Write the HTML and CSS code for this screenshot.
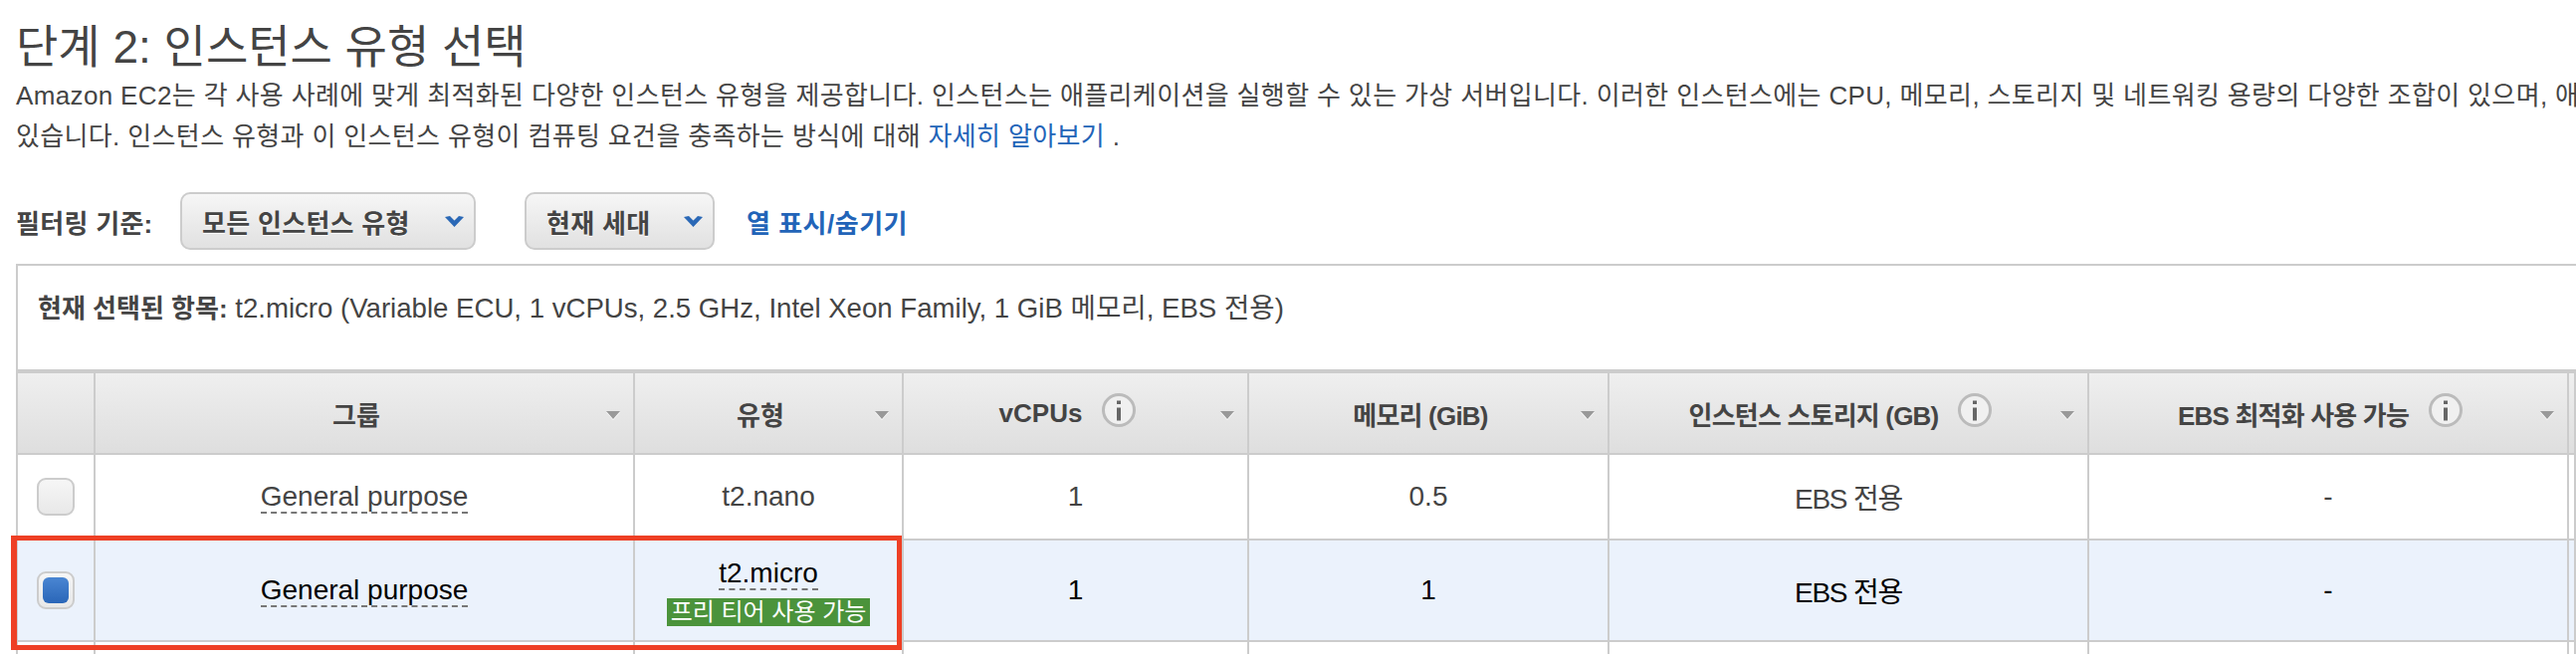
FILE: index.html
```html
<!DOCTYPE html>
<html lang="ko">
<head>
    <title>단계 2: 인스턴스 유형 선택</title>
    <link rel="stylesheet" href="styles.css">
</head>
<body>
<svg width="0" height="0" class="defs">
    <symbol id="info" viewBox="0 0 34 34">
        <circle cx="17" cy="17" r="15.5" fill="#f0f0f0" stroke="#bbb" stroke-width="3"/>
        <rect x="15" y="14.5" width="4" height="13" fill="#666"/>
        <rect x="15" y="7.5" width="4" height="3.5" fill="#666"/>
    </symbol>
    <symbol id="chevron" viewBox="0 0 19 11">
        <path d="M0 1 L5 0 L9.5 4.5 L14 0 L19 1 L9.5 11 Z" fill="#2a68b6"/>
    </symbol>
</svg>

<h1 class="title">단계 2: 인스턴스 유형 선택</h1>
<p class="intro">Amazon EC2는 각 사용 사례에 맞게 최적화된 다양한 인스턴스 유형을 제공합니다. 인스턴스는 애플리케이션을 실행할 수 있는 가상 서버입니다. 이러한 인스턴스에는 CPU, 메모리, 스토리지 및 네트워킹 용량의 다양한 조합이 있으며, 애<br>있습니다. 인스턴스 유형과 이 인스턴스 유형이 컴퓨팅 요건을 충족하는 방식에 대해 <a href="#" class="link">자세히 알아보기</a> .</p>

<div class="filters">
    <span class="filter-label">필터링 기준:</span>
    <button class="select select-type">모든 인스턴스 유형<svg class="chevron"><use href="#chevron"/></svg></button>
    <button class="select select-gen">현재 세대<svg class="chevron"><use href="#chevron"/></svg></button>
    <a href="#" class="link link-columns">열 표시/숨기기</a>
</div>

<div class="summary"><b>현재 선택된 항목:</b> t2.micro (Variable ECU, 1 vCPUs, 2.5 GHz, Intel Xeon Family, 1 GiB 메모리, EBS 전용)</div>

<table class="types">
    <colgroup>
        <col class="col-check">
        <col class="col-group">
        <col class="col-type">
        <col class="col-vcpu">
        <col class="col-memory">
        <col class="col-storage">
        <col class="col-ebs">
        <col class="col-rest">
    </colgroup>
    <thead>
        <tr>
            <th></th>
            <th><span class="head">그룹</span><i class="sort"></i></th>
            <th><span class="head">유형</span><i class="sort"></i></th>
            <th><span class="head">vCPUs<svg class="info"><use href="#info"/></svg></span><i class="sort"></i></th>
            <th><span class="head head-narrow">메모리 (GiB)</span><i class="sort"></i></th>
            <th><span class="head head-narrow">인스턴스 스토리지 (GB)<svg class="info"><use href="#info"/></svg></span><i class="sort"></i></th>
            <th><span class="head head-narrow">EBS 최적화 사용 가능<svg class="info"><use href="#info"/></svg></span><i class="sort"></i></th>
            <th></th>
        </tr>
    </thead>
    <tbody>
        <tr class="row">
            <td><span class="check"></span></td>
            <td><span class="dashed">General purpose</span></td>
            <td>t2.nano</td>
            <td>1</td>
            <td>0.5</td>
            <td class="ebs-only">EBS 전용</td>
            <td>-</td>
            <td></td>
        </tr>
        <tr class="row row-selected">
            <td><span class="check"><span class="check-on"></span></span></td>
            <td><span class="dashed">General purpose</span></td>
            <td class="type-free">
                <span class="dashed">t2.micro</span>
                <span class="free-tier">프리 티어 사용 가능</span>
            </td>
            <td>1</td>
            <td>1</td>
            <td class="ebs-only">EBS 전용</td>
            <td>-</td>
            <td></td>
        </tr>
        <tr class="row row-next">
            <td></td><td></td><td></td><td></td><td></td><td></td><td></td><td></td>
        </tr>
    </tbody>
</table>

<!-- 빨간 강조 표시 -->
<div class="highlight"></div>
</body>
</html>
```

FILE: styles.css
```css
html, body {
    margin: 0;
    padding: 0;
    height: 658px;
    overflow: hidden;
    background-color: #fff;
}

body {
    position: relative;
    font-family: "Liberation Sans", "Noto Sans CJK KR", sans-serif;
    font-size: 26px;
    color: #444;
    padding-left: 16px;
}

.defs {
    position: absolute;
}

.title {
    margin: 0;
    padding-top: 18px;
    font-size: 46px;
    line-height: 58px;
    font-weight: normal;
    white-space: nowrap;
}

.intro {
    margin: 0;
    line-height: 41px;
    letter-spacing: 0.36px;
    white-space: nowrap;
}

.link {
    color: #2264b8;
    text-decoration: none;
}

/* 필터 */
.filters {
    display: flex;
    align-items: center;
    height: 58px;
    margin-top: 35px;
    font-weight: bold;
    letter-spacing: 0.3px;
}

.filter-label {
    width: 165px;
}

.select {
    display: flex;
    align-items: center;
    justify-content: space-between;
    box-sizing: border-box;
    height: 58px;
    padding: 0 10px 0 20px;
    font: inherit;
    letter-spacing: inherit;
    color: #444;
    text-shadow: 0 1px 0 #fff;
    background: linear-gradient(#f6f6f6, #e1e1e1);
    border: 2px solid #ccc;
    border-radius: 10px;
}

.select-type {
    width: 297px;
}

.select-gen {
    width: 191px;
    margin-left: 49px;
}

.chevron {
    width: 19px;
    height: 11px;
}

.link-columns {
    margin-left: 32px;
    letter-spacing: 0.5px;
}

/* 현재 선택 */
.summary {
    box-sizing: border-box;
    width: 2572px;
    height: 106px;
    margin-top: 14px;
    padding: 27px 20px 0;
    font-size: 27.6px;
    line-height: 32px;
    white-space: nowrap;
    border: 2px solid #ccc;
    border-width: 2px 0 0 2px;
}

.summary b {
    font-size: 26px;
}

/* 표 */
.types {
    table-layout: fixed;
    width: 2572px;
    border-collapse: separate;
    border-spacing: 0;
    border-top: 4px solid #ccc;
    border-left: 2px solid #ccc;
}

.col-check { width: 78px; }
.col-group { width: 542px; }
.col-type { width: 270px; }
.col-vcpu { width: 347px; }
.col-memory { width: 362px; }
.col-storage { width: 482px; }
.col-ebs { width: 482px; }
.col-rest { width: 7px; }

.types th {
    position: relative;
    box-sizing: border-box;
    height: 82px;
    padding: 0 16px 0 0;
    background: linear-gradient(#efefef, #dedede);
    border-right: 2px solid #ccc;
    border-bottom: 2px solid #ccc;
    white-space: nowrap;
}

.head {
    display: inline-flex;
    align-items: center;
}

.head-narrow {
    letter-spacing: -0.8px;
}

.info {
    width: 34px;
    height: 34px;
    margin-left: 20px;
    margin-top: -6px;
}

.sort {
    position: absolute;
    right: 13px;
    top: 38px;
    width: 0;
    height: 0;
    border-left: 7px solid transparent;
    border-right: 7px solid transparent;
    border-top: 8px solid #999;
    filter: drop-shadow(0 1px 0 #fff);
}

.row td {
    box-sizing: border-box;
    height: 86px;
    padding: 0;
    font-size: 28px;
    text-align: center;
    vertical-align: middle;
    border-right: 2px solid #ccc;
    border-bottom: 2px solid #ccc;
}

.row .ebs-only {
    letter-spacing: -1.2px;
}

.row-selected td {
    height: 102px;
    color: #000;
    background-color: #ebf2fc;
}

.row-selected .type-free {
    padding-top: 2px;
}

.row-next td {
    height: 12px;
    border-bottom: 0;
}

.dashed {
    border-bottom: 2px dashed #777;
}

.check {
    display: inline-flex;
    align-items: center;
    justify-content: center;
    box-sizing: border-box;
    width: 38px;
    height: 38px;
    vertical-align: middle;
    background: linear-gradient(#f6f6f6, #e8e8e8);
    border: 2px solid #ccc;
    border-radius: 9px;
}

.check-on {
    width: 26px;
    height: 26px;
    background: linear-gradient(#4a86d2, #2a66b8);
    border-radius: 6px;
}

.free-tier {
    display: block;
    width: 204px;
    margin: 9px auto 0;
    font-size: 24px;
    line-height: 28px;
    color: #fff;
    background-color: #4b933b;
    white-space: nowrap;
}

.highlight {
    position: absolute;
    left: 11px;
    top: 538px;
    box-sizing: border-box;
    width: 895px;
    height: 115px;
    border: 5px solid #ee3f24;
    border-left-width: 6px;
}
```
